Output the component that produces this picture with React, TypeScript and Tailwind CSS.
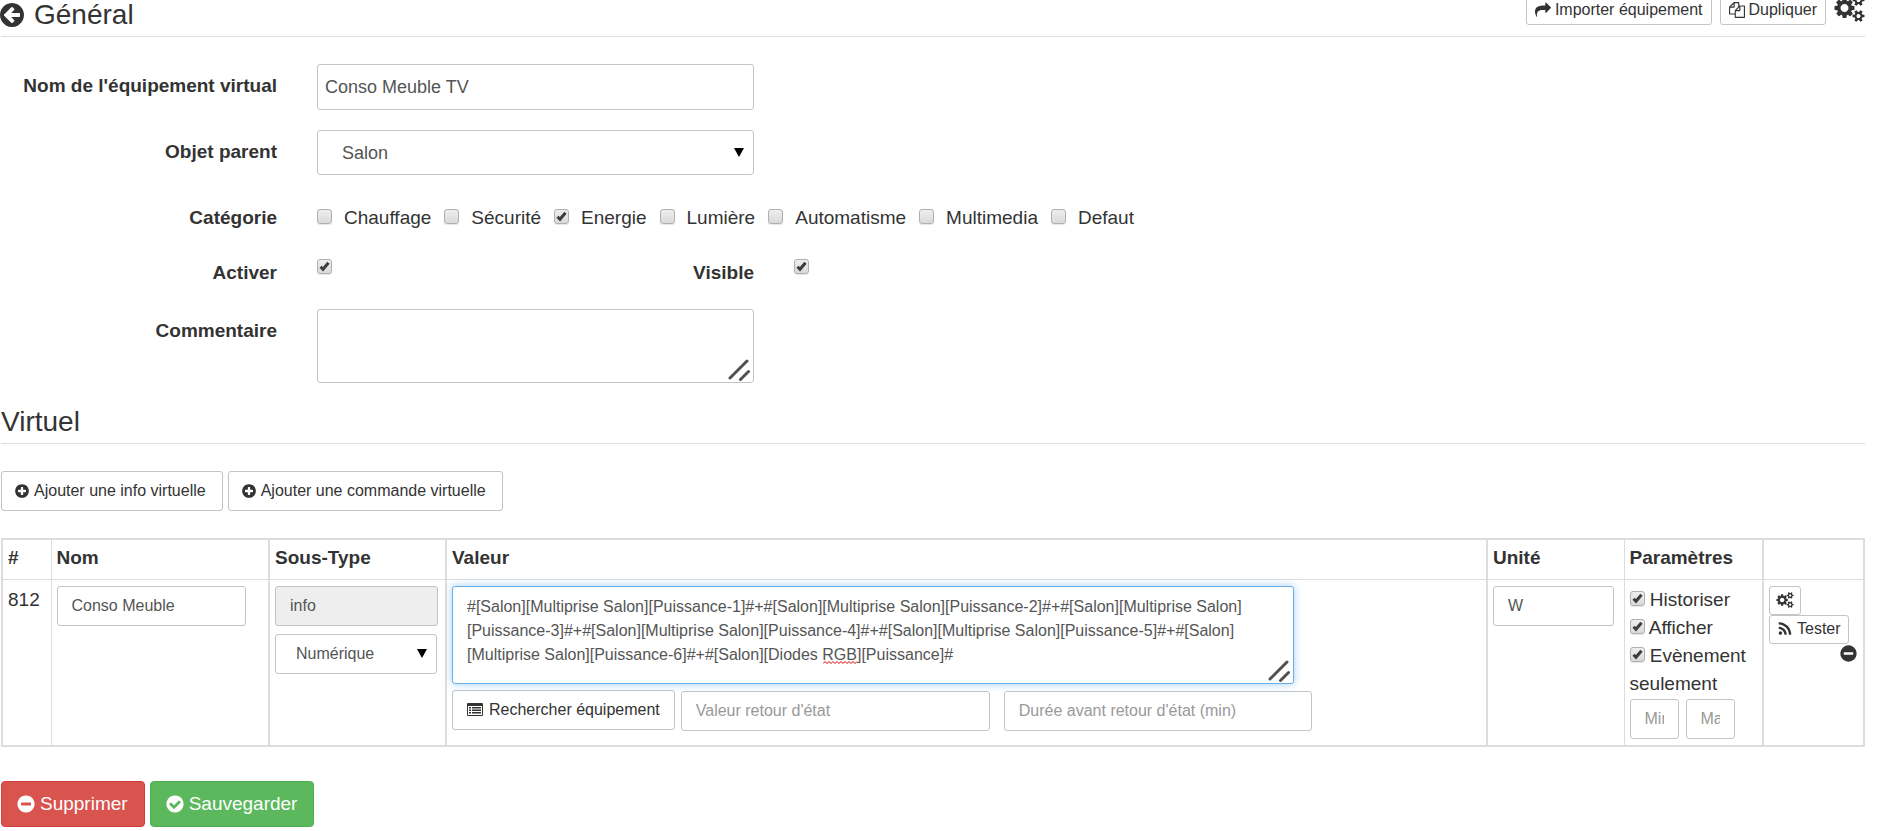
import React from "react";

const DISC =
  "q0 209-103 385.5t-279.5 279.5-385.5 103-385.5-103-279.5-279.5-103-385.5 103-385.5 279.5-279.5 385.5-103 385.5 103 279.5 279.5 103 385.5z";

const ICONS = {
  back:
    "M1408 960v-128q0-26-19-45t-45-19h-502l189-189q19-19 19-45t-19-45l-91-91q-18-18-45-18t-45 18l-362 362-91 91q-18 18-18 45t18 45l91 91 362 362q18 18 45 18t45-18l91-91q18-18 18-45t-18-45l-189-189h502q26 0 45-19t19-45zm256-64" +
    DISC,
  plus:
    "M1344 960v-128q0-26-19-45t-45-19h-256v-256q0-26-19-45t-45-19h-128q-26 0-45 19t-19 45v256h-256q-26 0-45 19t-19 45v128q0 26 19 45t45 19h256v256q0 26 19 45t45 19h128q26 0 45-19t19-45v-256h256q26 0 45-19t19-45zm320-64" +
    DISC,
  minus:
    "M1344 960v-128q0-26-19-45t-45-19h-768q-26 0-45 19t-19 45v128q0 26 19 45t45 19h768q26 0 45-19t19-45zm320-64" +
    DISC,
  check:
    "M1412 734q0-28-18-46l-91-90q-19-19-45-19t-45 19l-408 407-226-226q-19-19-45-19t-45 19l-91 90q-18 18-18 46 0 27 18 45l362 362q19 19 45 19 27 0 46-19l543-543q18-18 18-45zm252 162" +
    DISC,
  share:
    "M1792 640q0 26-19 45l-512 512q-19 19-45 19t-45-19-19-45v-256h-224q-98 0-175.5 6t-154 21.5-133 42.5-105.5 69.5-80 101-48.5 138.5-17.5 181q0 55 5 123 0 6 2.5 23.5t2.5 26.5q0 15-8.5 25t-23.5 10q-16 0-28-17-7-9-13-22t-13.5-30-10.5-24q-127-285-127-451 0-199 53-333 162-403 875-403h224v-256q0-26 19-45t45-19 45 19l512 512q19 19 19 45z",
  files:
    "M1696 384q40 0 68 28t28 68v1216q0 40-28 68t-68 28h-960q-40 0-68-28t-28-68v-288h-544q-40 0-68-28t-28-68v-672q0-40 20-88t48-76l408-408q28-28 76-48t88-20h416q40 0 68 28t28 68v328q68-40 128-40h416zm-544 213l-299 299h299v-299zm-640-384l-299 299h299v-299zm196 647l316-316v-416h-384v416q0 40-28 68t-68 28h-416v640h512v-256q0-40 20-88t48-76zm956 804v-1152h-384v416q0 40-28 68t-68 28h-416v640h896z",
  rss:
    "M576 1344q0 80-56 136t-136 56-136-56-56-136 56-136 136-56 136 56 56 136zm512 123q2 28-17 48-18 21-47 21h-135q-25 0-43-16.5t-20-41.5q-22-229-184.5-391.5t-391.5-184.5q-25-2-41.5-20t-16.5-43v-135q0-29 21-47 17-17 43-17h5q160 13 306 80.5t259 181.5q114 113 181.5 259t80.5 306zm512 2q2 27-18 47-18 20-46 20h-143q-26 0-44.5-17.5t-19.5-42.5q-12-215-101-408.5t-231.5-336-336-231.5-408.5-102q-25-1-42.5-19.5t-17.5-43.5v-143q0-28 20-46 18-18 44-18h3q262 13 501.5 120t425.5 294q187 186 294 425.5t120 501.5z",
};

const SMALL_COG =
  "v140q0 16-149 31-12 27-30 52 51 113 51 138 0 4-4 7-122 71-124 71-8 0-46-47t-52-68q-20 2-30 2t-30-2q-14 21-52 68t-46 47q-2 0-124-71-4-3-4-7 0-25 51-138-18-25-30-52-149-15-149-31v-140q0-16 149-31 13-29 30-52-51-113-51-138 0-4 4-7 4-2 35-20t59-34 30-16q8 0 46 46.5t52 67.5q20-2 30-2t30 2q51-71 92-112l6-2q4 0 124 70 4 3 4 7 0 25-51 138 17 23 30 52 149 15 149 31z";

const COGS =
  "M896 896q0-106-75-181t-181-75-181 75-75 181 75 181 181 75 181-75 75-181zm768 512q0-52-38-90t-90-38-90 38-38 90q0 53 37.5 90.5t90.5 37.5 90.5-37.5 37.5-90.5zm0-1024q0-52-38-90t-90-38-90 38-38 90q0 53 37.5 90.5t90.5 37.5 90.5-37.5 37.5-90.5zm-384 421v185q0 10-7 19.5t-16 10.5l-155 24q-11 35-32 76 34 48 90 115 7 11 7 20 0 12-7 19-23 30-82.5 89.5t-78.5 59.5q-11 0-21-7l-115-90q-37 19-77 31-11 108-23 155-7 24-30 24h-186q-11 0-20-7.5t-10-17.5l-23-153q-34-10-75-31l-118 89q-7 7-20 7-11 0-21-8-144-133-144-160 0-9 7-19 10-14 41-53t47-61q-23-44-35-82l-152-24q-10-1-17-9.5t-7-19.5v-185q0-10 7-19.5t16-10.5l155-24q11-35 32-76-34-48-90-115-7-11-7-20 0-12 7-20 22-30 82-89t79-59q11 0 21 7l115 90q34-18 77-32 11-108 23-154 7-24 30-24h186q11 0 20 7.5t10 17.5l23 153q34 10 75 31l118-89q8-7 20-7 11 0 21 8 144 133 144 160 0 8-7 19-12 16-42 54t-45 60q23 48 34 82l152 23q10 2 17 10.5t7 19.5zm640 533" +
  SMALL_COG +
  "m0-1024" +
  SMALL_COG;

function Icon({ name, className }: { name: keyof typeof ICONS; className: string }) {
  return (
    <svg viewBox="0 0 1792 1792" fill="currentColor" aria-hidden="true" className={"shrink-0 " + className}>
      <path d={ICONS[name]} />
    </svg>
  );
}

function Cogs({ className }: { className: string }) {
  return (
    <svg viewBox="0 0 1920 1792" fill="currentColor" aria-hidden="true" className={"shrink-0 " + className}>
      <path d={COGS} />
    </svg>
  );
}

function ListIcon() {
  return (
    <svg viewBox="0 0 16 13" fill="currentColor" aria-hidden="true" className="h-[13px] w-4 shrink-0">
      <path fillRule="evenodd" d="M1 0h14a1 1 0 0 1 1 1v11a1 1 0 0 1-1 1H1a1 1 0 0 1-1-1V1a1 1 0 0 1 1-1zm0 3v9h14V3z" />
      <path d="M2 4h2v1.500H2zM5 4h9v1.500H5zM2 6.500h2v1.500H2zM5 6.500h9v1.500H5zM2 9h2v1.500H2zM5 9h9v1.500H5z" />
    </svg>
  );
}

function Check({ id, checked }: { id: string; checked?: boolean }) {
  return (
    <span className="relative inline-block size-[15px] shrink-0">
      <input
        id={id}
        type="checkbox"
        defaultChecked={checked}
        className="peer block size-[15px] appearance-none rounded-[3px] border border-[#b0b0b0] bg-linear-to-b from-[#eeeeee] to-[#dadada] shadow-[0_1px_1px_rgba(0,0,0,0.1)]"
      />
      <svg
        viewBox="0 0 15 15"
        aria-hidden="true"
        className="pointer-events-none absolute inset-0 hidden size-[15px] peer-checked:block"
      >
        <path d="M3.500 7.800 6 10.300 11.500 3.800" fill="none" stroke="#3c3c3c" strokeWidth="3" />
      </svg>
    </span>
  );
}

function Grip() {
  return (
    <svg
      viewBox="0 0 22 22"
      aria-hidden="true"
      className="pointer-events-none absolute right-1 bottom-0.5 size-[22px]"
    >
      <path d="M2 19 19 2M12.500 20.500 20.500 12.500" stroke="#505050" strokeWidth="3" strokeLinecap="round" />
    </svg>
  );
}

function Arrow({ className }: { className: string }) {
  return (
    <svg viewBox="0 0 10 9" aria-hidden="true" className={"pointer-events-none absolute h-[9px] w-2.5 " + className}>
      <path d="M0 0h10L5 9z" fill="#000" />
    </svg>
  );
}

const box = "rounded-[3px] border border-[#c4c4c4]";
const field = box + " block h-10 px-3.5 text-[16px] text-[#555] placeholder:text-[#999]";
const button = box + " flex items-center whitespace-nowrap bg-white text-[#333]";
const label = "text-right font-bold";
const cell = "border border-[#ddd] px-[5px] text-left align-top";
const wideLine = " border-r-2";

const categories = [
  { id: "chauffage", text: "Chauffage" },
  { id: "securite", text: "Sécurité" },
  { id: "energie", text: "Energie", checked: true },
  { id: "lumiere", text: "Lumière" },
  { id: "automatisme", text: "Automatisme" },
  { id: "multimedia", text: "Multimedia" },
  { id: "defaut", text: "Defaut" },
];

const params = [
  { id: "historiser", text: "Historiser" },
  { id: "afficher", text: "Afficher" },
  { id: "evenement", text: "Evènement seulement" },
];

const formula =
  "#[Salon][Multiprise Salon][Puissance-1]#+#[Salon][Multiprise Salon][Puissance-2]#+#[Salon][Multiprise Salon][Puissance-3]#+#[Salon][Multiprise Salon][Puissance-4]#+#[Salon][Multiprise Salon][Puissance-5]#+#[Salon][Multiprise Salon][Puissance-6]#+#[Salon][Diodes RGB][Puissance]#";

export default function App() {
  return (
    <main className="overflow-hidden bg-white pr-[15px] pb-1 pl-px font-['Liberation_Sans',Arial,sans-serif] text-[19px] leading-[28px] text-[#333]">
      <header className="-mt-[6px] flex items-start justify-between border-b border-[#ddd] pb-1.5">
        <h1 className="flex items-center gap-2.5 pt-1.5 text-[28px] leading-[30px]">
          <a href="#retour" aria-label="Retour" className="-ml-px">
            <Icon name="back" className="size-7 -mx-0.5" />
          </a>
          Général
        </h1>
        <div className="flex items-start gap-2">
          <button type="button" className={button + " h-[31px] gap-1 px-2 text-[16px]"}>
            <Icon name="share" className="size-4" />
            Importer équipement
          </button>
          <button type="button" className={button + " h-[31px] gap-1 px-2 text-[16px]"}>
            <Icon name="files" className="size-4" />
            Dupliquer
          </button>
          <button type="button" aria-label="Configuration avancée">
            <Cogs className="h-7 w-[31px]" />
          </button>
        </div>
      </header>

      <form className="grid grid-cols-[276fr_437fr_1071fr] gap-x-10 pt-[27px]">
        <label htmlFor="nom" className={label + " pt-2"}>
          Nom de l'équipement virtual
        </label>
        <input id="nom" defaultValue="Conso Meuble TV" className={box + " h-[46px] px-[7px] text-[18px] text-[#555]"} />
        <span />

        <label htmlFor="parent" className={label + " mt-5 pt-2"}>
          Objet parent
        </label>
        <div className="relative mt-5">
          <select
            id="parent"
            className={box + " block h-[45px] w-full appearance-none px-6 text-[18px] text-[#555]"}
          >
            <option>Salon</option>
          </select>
          <Arrow className="top-[18px] right-[10px]" />
        </div>
        <span />

        <span className={label + " mt-[29px]"}>Catégorie</span>
        <div className="col-span-2 mt-[29px] flex gap-[13px]">
          {categories.map((c) => (
            <label key={c.id} htmlFor={c.id} className="flex gap-3">
              <span className="flex pt-[5px]">
                <Check id={c.id} checked={c.checked} />
              </span>
              {c.text}
            </label>
          ))}
        </div>

        <label htmlFor="activer" className={label + " mt-[27px]"}>
          Activer
        </label>
        <div className="mt-[27px] flex justify-between">
          <Check id="activer" checked />
          <label htmlFor="visible" className="font-bold">
            Visible
          </label>
        </div>
        <div className="mt-[27px] flex">
          <Check id="visible" checked />
        </div>

        <label htmlFor="commentaire" className={label + " mt-[22px] pt-2"}>
          Commentaire
        </label>
        <div className="relative mt-[22px]">
          <textarea
            id="commentaire"
            className={box + " block h-[74px] w-full resize-none px-[7px] text-[18px] text-[#555]"}
          />
          <Grip />
        </div>
      </form>

      <h2 className="mt-6 border-b border-[#ddd] pb-1.5 text-[28px] leading-[30px]">Virtuel</h2>

      <div className="mt-[27px] flex gap-[5px]">
        <button type="button" className={button + " h-10 gap-1 pr-4 pl-3 text-[16px]"}>
          <Icon name="plus" className="size-4" />
          Ajouter une info virtuelle
        </button>
        <button type="button" className={button + " h-10 gap-1 pr-4 pl-3 text-[16px]"}>
          <Icon name="plus" className="size-4" />
          Ajouter une commande virtuelle
        </button>
      </div>

      <table className="mt-[27px] w-full table-fixed border-collapse border-2 border-[#ddd]">
        <colgroup>
          <col className="w-[49px]" />
          <col className="w-[218px]" />
          <col className="w-[177px]" />
          <col />
          <col className="w-[137px]" />
          <col className="w-[139px]" />
          <col className="w-[101px]" />
        </colgroup>
        <thead>
          <tr className="h-10">
            <th className={cell + " pt-1"}>#</th>
            <th className={cell + wideLine + " pt-1"}>Nom</th>
            <th className={cell + wideLine + " pt-1"}>Sous-Type</th>
            <th className={cell + wideLine + " pt-1"}>Valeur</th>
            <th className={cell + " pt-1"}>Unité</th>
            <th className={cell + wideLine + " pt-1"}>Paramètres</th>
            <td className={cell} />
          </tr>
        </thead>
        <tbody>
          <tr>
            <td className={cell + " pt-1.5"}>812</td>
            <td className={cell + wideLine + " pt-1.5"}>
              <input aria-label="Nom" defaultValue="Conso Meuble" className={field + " w-[189px]"} />
            </td>
            <td className={cell + wideLine + " pt-1.5"}>
              <input aria-label="Type" disabled defaultValue="info" className={field + " w-[163px] bg-[#eee]"} />
              <div className="relative mt-2 w-[162px]">
                <select aria-label="Sous-type" className={field + " w-full appearance-none pl-5"}>
                  <option>Numérique</option>
                </select>
                <Arrow className="top-[15px] right-[10px]" />
              </div>
            </td>
            <td className={cell + wideLine + " pt-1.5"}>
              <div className="relative w-[842px]">
                <textarea
                  aria-label="Valeur"
                  spellCheck={false}
                  defaultValue={formula}
                  className="block h-[98px] w-full resize-none overflow-hidden rounded-[3px] border border-[#66afe9] bg-white px-3.5 py-2 text-[16px] leading-6 text-[#555] shadow-[0_0_8px_rgba(102,175,233,0.6)] outline-none"
                />
                <svg aria-hidden="true" className="pointer-events-none absolute top-[75px] left-[371px] h-[3px] w-[35px]">
                  <path
                    d="M0 2.500 2 .5 4 2.500 6 .5 8 2.500 10 .5 12 2.500 14 .5 16 2.500 18 .5 20 2.500 22 .5 24 2.500 26 .5 28 2.500 30 .5 32 2.500 34 .5"
                    fill="none"
                    stroke="#e00000"
                  />
                </svg>
                <Grip />
              </div>
              <div className="mt-1.5 flex items-start">
                <button type="button" className={button + " h-10 gap-1.5 px-3.5 text-[16px]"}>
                  <ListIcon />
                  Rechercher équipement
                </button>
                <input
                  aria-label="Valeur retour d'état"
                  placeholder="Valeur retour d'état"
                  className={field + " mt-px ml-1.5 w-[309px]"}
                />
                <input
                  aria-label="Durée avant retour d'état (min)"
                  placeholder="Durée avant retour d'état (min)"
                  className={field + " mt-px ml-3.5 w-[308px]"}
                />
              </div>
            </td>
            <td className={cell + " pt-1.5"}>
              <input aria-label="Unité" defaultValue="W" className={field + " w-[121px]"} />
            </td>
            <td className={cell + wideLine + " pt-1.5"}>
              {params.map((p) => (
                <div key={p.id}>
                  <Check id={p.id} checked /> <label htmlFor={p.id}>{p.text}</label>
                </div>
              ))}
              <div className="mt-px mb-1.5 flex gap-[7px]">
                <input aria-label="Min" placeholder="Min" className={field + " w-[49px]"} />
                <input aria-label="Max" placeholder="Max" className={field + " w-[49px]"} />
              </div>
            </td>
            <td className={cell + " pt-1.5"}>
              <button type="button" aria-label="Configurer" className={button + " h-[29px] px-1.5"}>
                <Cogs className="h-4 w-[18px]" />
              </button>
              <button type="button" className={button + " h-[29px] gap-1 px-[7px] text-[16px]"}>
                <Icon name="rss" className="size-4" />
                Tester
              </button>
              <button type="button" aria-label="Supprimer la commande" className="ml-auto block">
                <Icon name="minus" className="size-[19px]" />
              </button>
            </td>
          </tr>
        </tbody>
      </table>

      <div className="mt-[34px] flex gap-[5px] text-white">
        <button
          type="button"
          className="flex h-[46px] items-center gap-1 rounded-[4px] border border-[#d43f3a] bg-[#d9534f] pr-4 pl-3.5"
        >
          <Icon name="minus" className="size-5" />
          Supprimer
        </button>
        <button
          type="button"
          className="flex h-[46px] items-center gap-1 rounded-[4px] border border-[#4cae4c] bg-[#5cb85c] pr-4 pl-3.5"
        >
          <Icon name="check" className="size-5" />
          Sauvegarder
        </button>
      </div>
    </main>
  );
}
